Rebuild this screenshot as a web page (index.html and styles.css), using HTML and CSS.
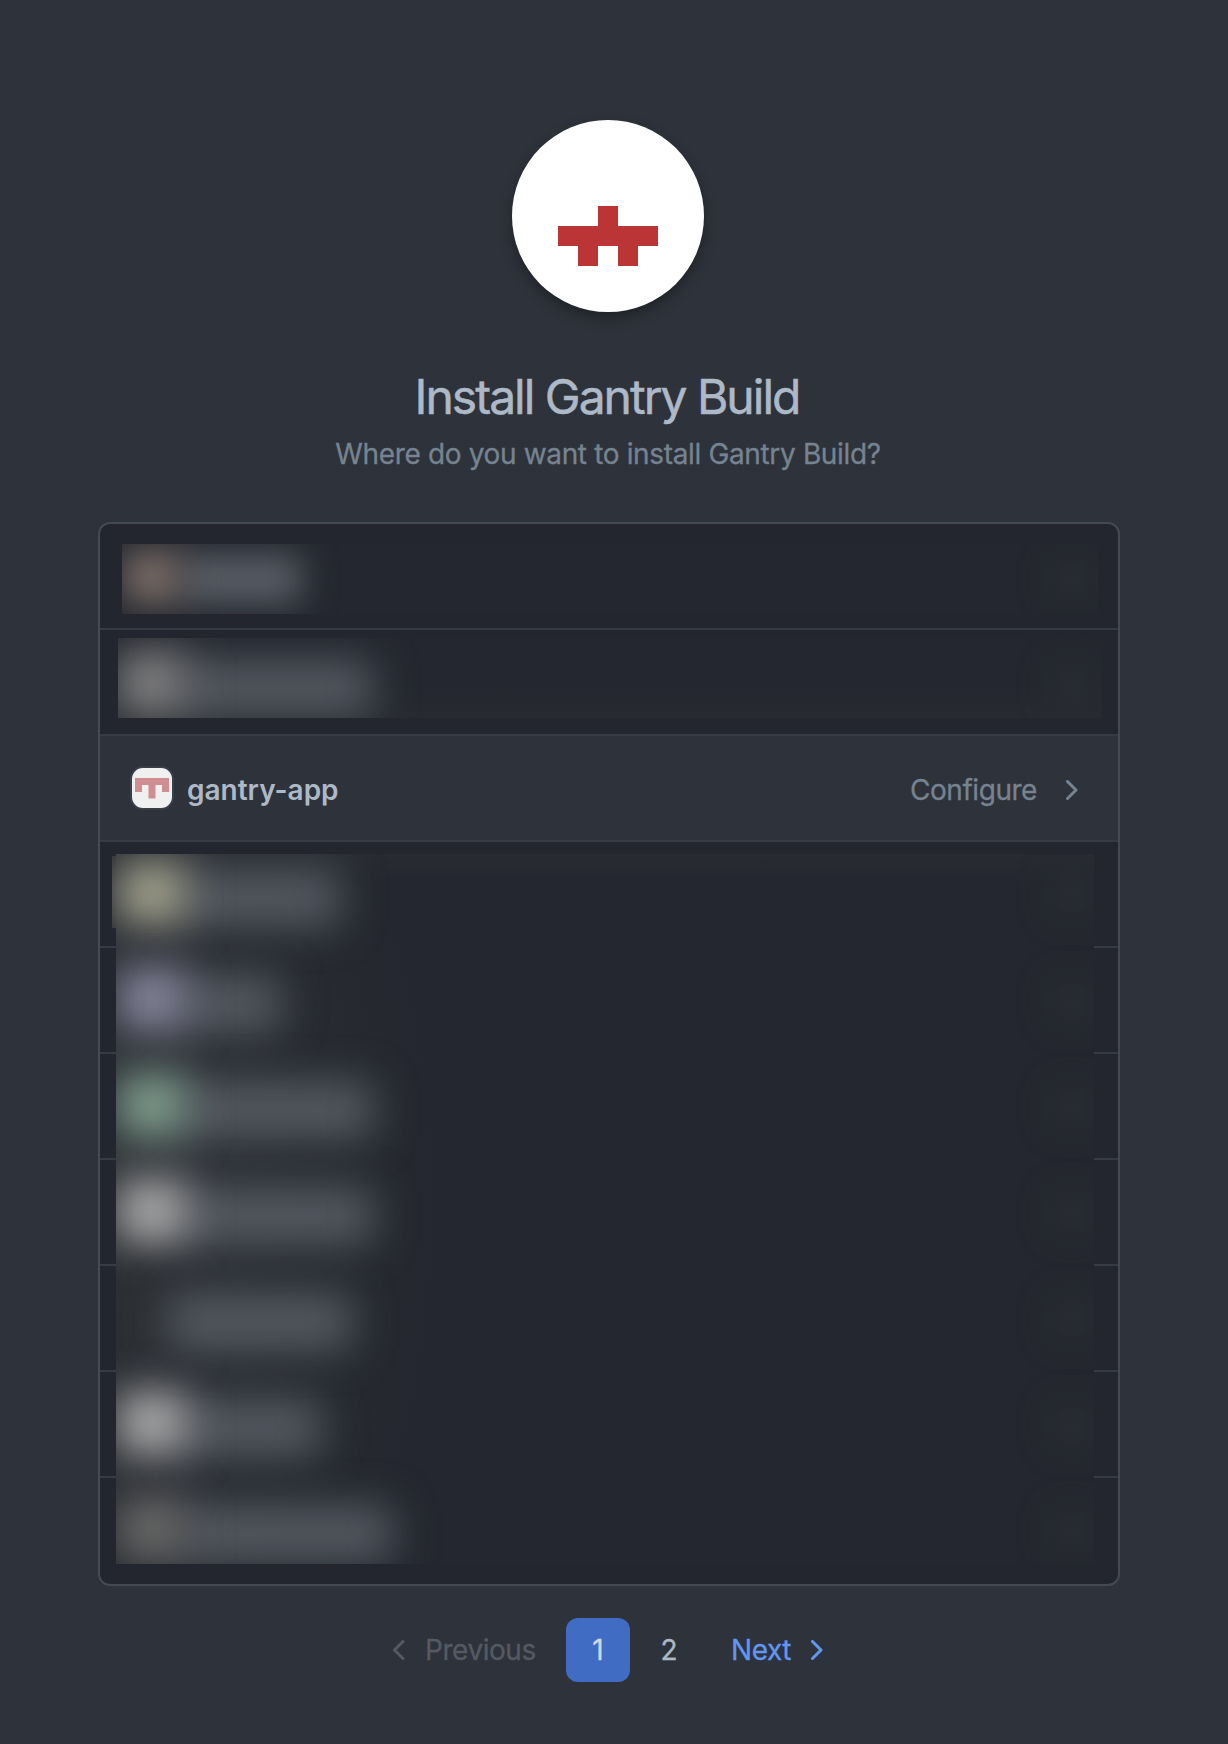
FILE: index.html
```html
<!DOCTYPE html>
<html lang="en">
<head>
<meta charset="utf-8">
<title>Install Gantry Build</title>
<link rel="stylesheet" href="styles.css">
</head>
<body>
<main class="page">
  <header class="intro">
    <div class="logo">
      <svg width="192" height="192" viewBox="0 0 192 192" shape-rendering="crispEdges"><path fill="#bb3537" d="M86 86h20v20h40v20h-20v20h-20v-20h-20v20h-20v-20h-20v-20h40z"/></svg>
    </div>
    <h1 class="title">Install Gantry Build</h1>
    <p class="subtitle">Where do you want to install Gantry Build?</p>
  </header>

  <section class="accounts">
    <div class="row"></div>
    <div class="row"></div>
    <a class="row active">
      <svg class="org" width="44" height="44" viewBox="0 0 44 44"><rect width="44" height="44" rx="13" fill="#3a3f47"/><rect x="2" y="2" width="40" height="40" rx="11" fill="#f0f0f0"/><path fill="#d08d92" d="M5 12h34v14h-7v-7h-6.500v13.500h-7v-13.500h-6.500v7h-7z"/></svg>
      <span class="org-name">gantry-app</span>
      <span class="action">Configure</span>
      <svg class="chevron" width="12" height="20" viewBox="0 0 12 20"><path d="M1.500 1.500l8.500 8.500-8.500 8.500"/></svg>
    </a>
    <div class="row"></div>
    <div class="row"></div>
    <div class="row"></div>
    <div class="row"></div>
    <div class="row"></div>
    <div class="row"></div>
    <div class="row"></div>

    <div class="veil veil-first"><div class="hidden-row"><i class="face brown"></i><i class="bar w118"></i><i class="dot"></i></div></div>
    <div class="veil veil-second"><div class="hidden-row"><i class="face stone"></i><i class="bar w186"></i><i class="dot"></i></div></div>
    <div class="veil veil-edge"><div class="hidden-row"><i class="face olive"></i></div></div>
    <div class="veil veil-rest">
      <div class="hidden-row"><i class="face olive"></i><i class="bar w154"></i><i class="dot"></i></div>
      <div class="hidden-row"><i class="face violet"></i><i class="bar w94"></i><i class="dot"></i></div>
      <div class="hidden-row"><i class="face green"></i><i class="bar w186"></i><i class="dot"></i></div>
      <div class="hidden-row"><i class="face silver"></i><i class="bar w186"></i><i class="dot"></i></div>
      <div class="hidden-row"><i class="face dark"></i><i class="bar w166"></i><i class="dot"></i></div>
      <div class="hidden-row"><i class="face silver"></i><i class="bar w134"></i><i class="dot"></i></div>
      <div class="hidden-row"><i class="face ash"></i><i class="bar w206"></i><i class="dot"></i></div>
    </div>
  </section>

  <nav class="pager">
    <span class="prev"><svg class="chevron" width="12" height="20" viewBox="0 0 12 20"><path d="M10 1.500l-8.500 8.500 8.500 8.500"/></svg><span>Previous</span></span>
    <span class="num current">1</span>
    <span class="num">2</span>
    <span class="next"><span>Next</span><svg class="chevron" width="12" height="20" viewBox="0 0 12 20"><path d="M1.500 1.500l8.500 8.500-8.500 8.500"/></svg></span>
  </nav>
</main>
</body>
</html>
```
FILE: styles.css
```css
* { box-sizing: border-box; }
body {
  margin: 0;
  background: #2e323a;
  color: #adb9c7;
  font: 400 28px/42px Inter, "Liberation Sans", sans-serif;
  -webkit-text-stroke: .3px currentColor;
}
.page { width: 1022px; margin-left: 98px; padding-top: 120px; height: 1744px; }
.intro { display: flex; flex-direction: column; align-items: center; width: 1020px; height: 402px; }
.logo { width: 192px; height: 192px; border-radius: 50%; background: #fff; box-shadow: 0 6px 12px rgba(20, 24, 28, .55); }
.logo svg { display: block; }
.title { margin: 49px 0 0; padding-right: 2px; font-size: 48px; line-height: 72px; font-weight: 400; letter-spacing: -2px; white-space: nowrap; -webkit-text-stroke-width: .5px; }
.subtitle { margin: 0; color: #768390; white-space: nowrap; letter-spacing: -.35px; }

.accounts { position: relative; height: 1064px; border: 2px solid #444952; border-radius: 12px; background: #23262e; overflow: hidden; }
.row { display: flex; align-items: center; height: 106px; border-bottom: 2px solid #373c44; }
.row:nth-child(10) { border-bottom: 0; }
.active { background: #2e323a; padding: 4px 40px 0 30px; }
.org { margin-top: -4px; }
.org-name { margin-left: 13px; font-weight: 600; -webkit-text-stroke-width: 0; }
.action { margin-left: auto; color: #768390; letter-spacing: -.45px; }
.chevron { fill: none; stroke: currentColor; stroke-width: 3; stroke-linecap: round; stroke-linejoin: round; }
.active .chevron { margin-left: 29px; color: #768390; }

.veil { position: absolute; isolation: isolate; overflow: hidden; background: #24272f; }
.veil-first { left: 22px; top: 20px; width: 976px; height: 70px; padding: 13px 0 0 8px; }
.veil-second { left: 18px; top: 114px; width: 984px; height: 80px; padding: 25px 0 0 12px; background: linear-gradient(#24272f 60%, #272a31); }
.veil-edge { left: 12px; top: 332px; width: 6px; height: 72px; padding-top: 17px; }
.veil-edge .hidden-row { margin-left: 18px; }
.veil-rest { left: 16px; top: 330px; width: 978px; height: 710px; padding: 19px 0 0 14px; background: radial-gradient(ellipse 290px 560px at 30px 350px, #2e3136, #24272f00), linear-gradient(#282b32, #24272f 28px); }
.hidden-row { display: flex; align-items: center; width: 948px; height: 106px; margin-top: -31px; margin-bottom: 31px; }
.veil-rest .hidden-row { margin-top: 0; margin-bottom: 0; }
.veil-rest .hidden-row:first-child { margin-top: -31px; }
.face { flex: none; z-index: 1; width: 70px; height: 64px; margin: 0 0 4px -13px; filter: blur(21px); }
.bar { height: 54px; margin: 5px 0 0 -9px; background: #555a62; filter: blur(21px); }
.dot { width: 36px; height: 36px; margin: 0 -12px 0 auto; background: #2b2e35; filter: blur(16px); }
.veil-first .face { width: 58px; height: 54px; margin-left: -7px; filter: blur(17px); }
.veil-first .bar { height: 48px; margin: 0 0 0 -2px; background: #595f67; filter: blur(17px); }
.brown { background: #786b65; }
.stone { background: #808080; }
.olive { background: #a1a18d; }
.violet { background: #86869b; }
.green { background: #7f9d8d; }
.silver { background: #a8a8a8; }
.dark { background: #2d3033; }
.dark + .bar { margin-left: -18px; width: 182px; z-index: 2; }
.ash { background: #686867; }
.w94 { width: 102px; }
.w118 { width: 122px; }
.w134 { width: 142px; }
.w154 { width: 162px; }
.w166 { width: 174px; }
.w186 { width: 194px; }
.w206 { width: 214px; }

.pager { display: flex; align-items: center; height: 64px; margin-top: 32px; padding-left: 295px; }
.prev, .next { display: flex; align-items: center; letter-spacing: -.45px; }
.prev { width: 173px; gap: 20px; color: #545a64; }
.num { width: 64px; height: 64px; line-height: 64px; text-align: center; border-radius: 12px; }
.current { background: #416cc4; color: #cdd9e5; margin-right: 7px; }
.next { margin-left: 30px; gap: 20px; color: #6197f3; }
```
